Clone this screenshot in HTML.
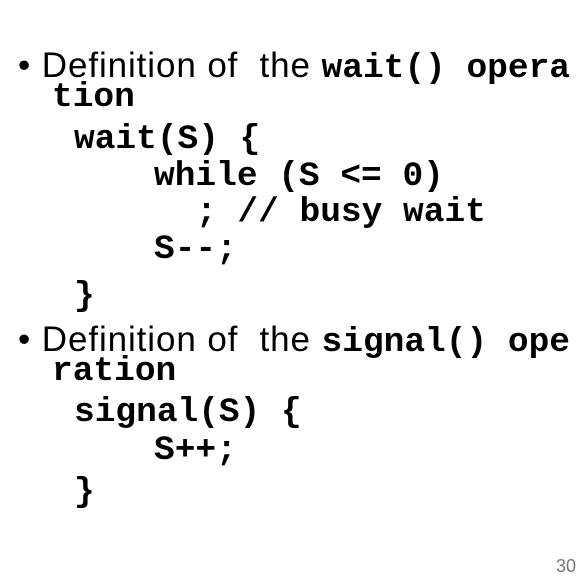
<!DOCTYPE html>
<html><head><style>
body{margin:0;width:588px;height:566px;background:#fff;position:relative;overflow:hidden;color:#000}
.l{position:absolute;white-space:pre;line-height:36px;height:36px}
.m{font-family:"Liberation Mono",monospace;font-weight:bold;font-size:34.5px}
.s{font-family:"Liberation Sans",sans-serif;font-size:35px;letter-spacing:0.9px}
</style></head><body>
<div class="l" style="left:18px;top:48px"><span class="s">• Definition of  the </span><span class="m">wait() opera</span></div>
<div class="l m" style="left:52px;top:80px">tion</div>
<div class="l m" style="left:74px;top:122px">wait(S) {</div>
<div class="l m" style="left:154px;top:159px">while (S &lt;= 0)</div>
<div class="l m" style="left:196px;top:195px">; // busy wait</div>
<div class="l m" style="left:154px;top:232px">S--;</div>
<div class="l m" style="left:74px;top:279px">}</div>
<div class="l" style="left:18px;top:322px"><span class="s">• Definition of  the </span><span class="m">signal() ope</span></div>
<div class="l m" style="left:52px;top:354px">ration</div>
<div class="l m" style="left:74px;top:395px">signal(S) {</div>
<div class="l m" style="left:154px;top:433px">S++;</div>
<div class="l m" style="left:74px;top:475px">}</div>
<div style="position:absolute;left:556px;top:556px;font-family:'Liberation Sans',sans-serif;font-size:18px;color:#777">30</div>
</body></html>
